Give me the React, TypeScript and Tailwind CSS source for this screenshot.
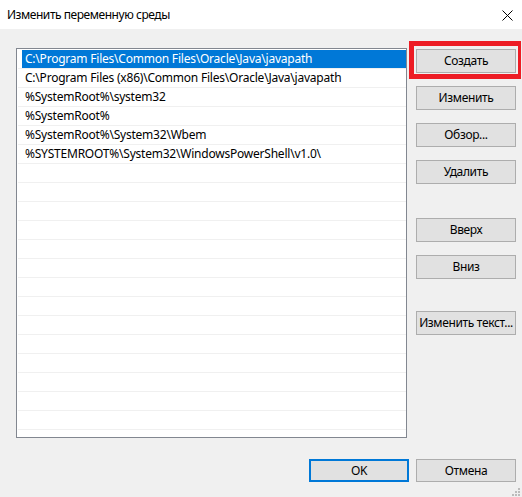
import React from "react";

const rows = [
  "C:\\Program Files\\Common Files\\Oracle\\Java\\javapath",
  "C:\\Program Files (x86)\\Common Files\\Oracle\\Java\\javapath",
  "%SystemRoot%\\system32",
  "%SystemRoot%",
  "%SystemRoot%\\System32\\Wbem",
  "%SYSTEMROOT%\\System32\\WindowsPowerShell\\v1.0\\",
];

function Btn({ label, className = "" }: { label: string; className?: string }) {
  return (
    <div
      className={
        "w-[100px] h-[24px] bg-[#e1e1e1] border border-[#adadad] flex items-center justify-center text-black whitespace-nowrap tracking-[-0.35px] " +
        className
      }
    >
      {label}
    </div>
  );
}

export default function App() {
  const all = Array.from({ length: 20 }, (_, i) => rows[i] ?? "");
  return (
    <div className="w-[522px] h-[497px] bg-[#f0f0f0] flex flex-col relative overflow-hidden font-['Segoe_UI','Noto_Sans',sans-serif] text-[12px] text-black leading-none">
      <div className="h-[29px] bg-white flex items-center justify-between pl-[7px] pr-[9px]">
        <span className="tracking-[-0.45px] whitespace-nowrap">Изменить переменную среды</span>
        <svg width="11" height="11" viewBox="0 0 11 11" className="mt-[1px]">
          <path d="M0.5 0.5L10.5 10.5M10.5 0.5L0.5 10.5" stroke="#000" strokeWidth="1" />
        </svg>
      </div>
      <div className="flex pl-[16px] pt-[19px]">
        <div className="w-[391px] h-[390px] border border-[#828790] bg-white pt-[1px] pl-[1px]">
          {all.map((t, i) => (
            <div key={i} className="h-[19px] border-b border-[#f0f0f0] flex">
              <div
                className={
                  "flex-1 flex items-center pl-[3px] ml-[4px] whitespace-nowrap tracking-[-0.22px] " +
                  (i === 0 ? "bg-[#0078d7] text-white" : "")
                }
              >
                {t}
              </div>
            </div>
          ))}
        </div>
        <div className="ml-[9px] w-[100px] flex flex-col pt-[1px]">
          <Btn label="Создать" />
          <Btn label="Изменить" className="mt-[13px]" />
          <Btn label="Обзор..." className="mt-[13px]" />
          <Btn label="Удалить" className="mt-[13px]" />
          <Btn label="Вверх" className="mt-[34px]" />
          <Btn label="Вниз" className="mt-[13px]" />
          <Btn label="Изменить текст..." className="mt-[32px]" />
        </div>
      </div>
      <div className="flex justify-end gap-[7px] pr-[6px] mt-[21px] tracking-[-0.35px]">
        <div className="w-[100px] h-[23px] bg-[#e1e1e1] border-2 border-[#0078d7] flex items-center justify-center">
          OK
        </div>
        <div className="w-[100px] h-[23px] bg-[#e1e1e1] border border-[#adadad] flex items-center justify-center">
          Отмена
        </div>
      </div>
      <div className="absolute left-[409px] top-[41px] w-[112px] h-[38px] border-[5px] border-r-[3px] border-[#ed1c24]" />
      <div className="absolute left-[518px] top-[488px] w-[2px] h-[2px] bg-[#bcbcbc]" />
      <div className="absolute left-[515px] top-[491px] w-[2px] h-[2px] bg-[#bcbcbc]" />
      <div className="absolute left-[518px] top-[491px] w-[2px] h-[2px] bg-[#bcbcbc]" />
      <div className="absolute left-[512px] top-[494px] w-[2px] h-[2px] bg-[#bcbcbc]" />
      <div className="absolute left-[515px] top-[494px] w-[2px] h-[2px] bg-[#bcbcbc]" />
      <div className="absolute left-[518px] top-[494px] w-[2px] h-[2px] bg-[#bcbcbc]" />
    </div>
  );
}
